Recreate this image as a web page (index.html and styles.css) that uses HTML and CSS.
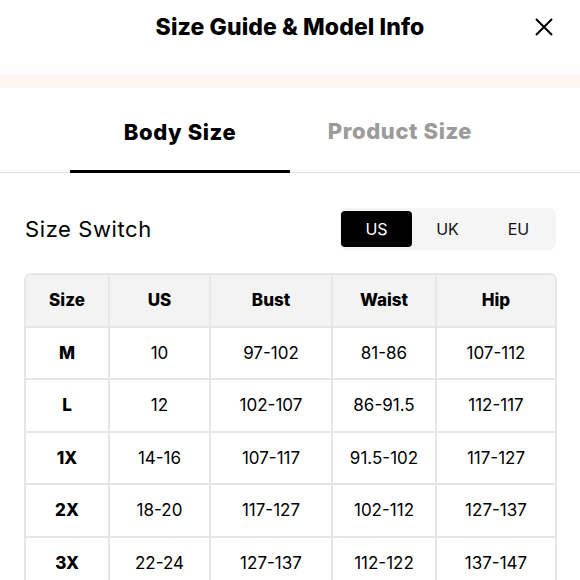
FILE: index.html
```html
<!DOCTYPE html>
<html>
<head>
<meta charset="utf-8">
<link rel="stylesheet" href="styles.css">
</head>
<body>
<div class="page">
  <header class="header">
    <h1 class="title">Size Guide &amp; Model Info</h1>
    <button class="close" aria-label="Close">
      <svg width="18" height="18" viewBox="0 0 18 18"><path d="M1 1L17 17M17 1L1 17" stroke="#000" stroke-width="2" fill="none"/></svg>
    </button>
  </header>
  <div class="band"><div class="band-top"></div><div class="band-bottom"></div></div>
  <nav class="tabs">
    <div class="tab active">Body Size</div>
    <div class="tab">Product Size</div>
  </nav>
  <section class="switch-row">
    <div class="switch-label">Size Switch</div>
    <div class="segment">
      <div class="seg active">US</div>
      <div class="seg">UK</div>
      <div class="seg">EU</div>
    </div>
  </section>
  <div class="table-wrap">
    <table class="sizes">
      <thead>
        <tr><th>Size</th><th>US</th><th>Bust</th><th>Waist</th><th>Hip</th></tr>
      </thead>
      <tbody>
        <tr><th>M</th><td>10</td><td>97-102</td><td>81-86</td><td>107-112</td></tr>
        <tr><th>L</th><td>12</td><td>102-107</td><td>86-91.5</td><td>112-117</td></tr>
        <tr><th>1X</th><td>14-16</td><td>107-117</td><td>91.5-102</td><td>117-127</td></tr>
        <tr><th>2X</th><td>18-20</td><td>117-127</td><td>102-112</td><td>127-137</td></tr>
        <tr><th>3X</th><td>22-24</td><td>127-137</td><td>112-122</td><td>137-147</td></tr>
      </tbody>
    </table>
  </div>
</div>
</body>
</html>
```

FILE: styles.css
```css
html, body {
  margin: 0;
  padding: 0;
  background: #fff;
}
body {
  font-family: "Inter", "Liberation Sans", sans-serif;
  color: #000;
  overflow: hidden;
}
.page {
  width: 580px;
}
.header {
  height: 64px;
  position: relative;
  display: flex;
  align-items: center;
  justify-content: center;
}
.title {
  margin: 0;
  font-size: 23px;
  font-weight: 800;
  letter-spacing: 0.1px;
  padding-bottom: 10px;
}
.close {
  position: absolute;
  right: 27px;
  top: 18px;
  border: 0;
  padding: 0;
  background: none;
  width: 18px;
  height: 18px;
  display: flex;
}
.band-top {
  height: 11px;
  background: #fcfcfc;
}
.band-bottom {
  height: 13px;
  background: #fdf6f2;
}
.tabs {
  display: flex;
  justify-content: center;
  border-bottom: 1px solid #e3e3e3;
  height: 84px;
}
.tab {
  width: 220px;
  display: flex;
  align-items: center;
  justify-content: center;
  font-size: 22px;
  font-weight: 800;
  letter-spacing: 0.6px;
  color: #9b9b9b;
  box-sizing: border-box;
  padding-top: 2px;
}
.tab.active {
  color: #000;
  border-bottom: 3px solid #000;
  margin-bottom: -1px;
  padding-top: 6px;
}
.switch-row {
  display: flex;
  align-items: center;
  justify-content: space-between;
  padding: 35px 24px 0 25px;
}
.switch-label {
  font-size: 22px;
  font-weight: 400;
  letter-spacing: 0.6px;
}
.segment {
  display: flex;
  background: #f5f5f5;
  border-radius: 7px;
  padding: 3px 0 3px 1px;
  width: 216px;
  box-sizing: border-box;
}
.seg {
  width: 71px;
  height: 36px;
  display: flex;
  align-items: center;
  justify-content: center;
  font-size: 16px;
  border-radius: 4px;
  color: #111;
}
.seg.active {
  background: #000;
  color: #fff;
}
.table-wrap {
  margin: 23px 23px 0 24px;
  border: 2px solid #e6e6e6;
  border-radius: 7px 7px 0 0;
  overflow: hidden;
}
.sizes {
  width: 100%;
  border-collapse: collapse;
  table-layout: fixed;
}
.sizes th, .sizes td {
  height: 50.5px;
  text-align: center;
  border: 2px solid #e6e6e6;
  font-size: 17px;
  padding: 0;
}
.sizes tr:first-child th, .sizes tr:first-child td { border-top: 0; }
.sizes th:first-child { border-left: 0; }
.sizes td:last-child, .sizes th:last-child { border-right: 0; }
.sizes thead th {
  background: #f3f3f3;
  font-weight: 800;
}
.sizes tbody th {
  font-weight: 800;
}
.sizes td {
  font-weight: 400;
}
.sizes th:nth-child(1) { width: 82px; }
.sizes th:nth-child(2) { width: 99px; }
.sizes th:nth-child(3) { width: 120px; }
.sizes th:nth-child(4) { width: 102px; }
```
